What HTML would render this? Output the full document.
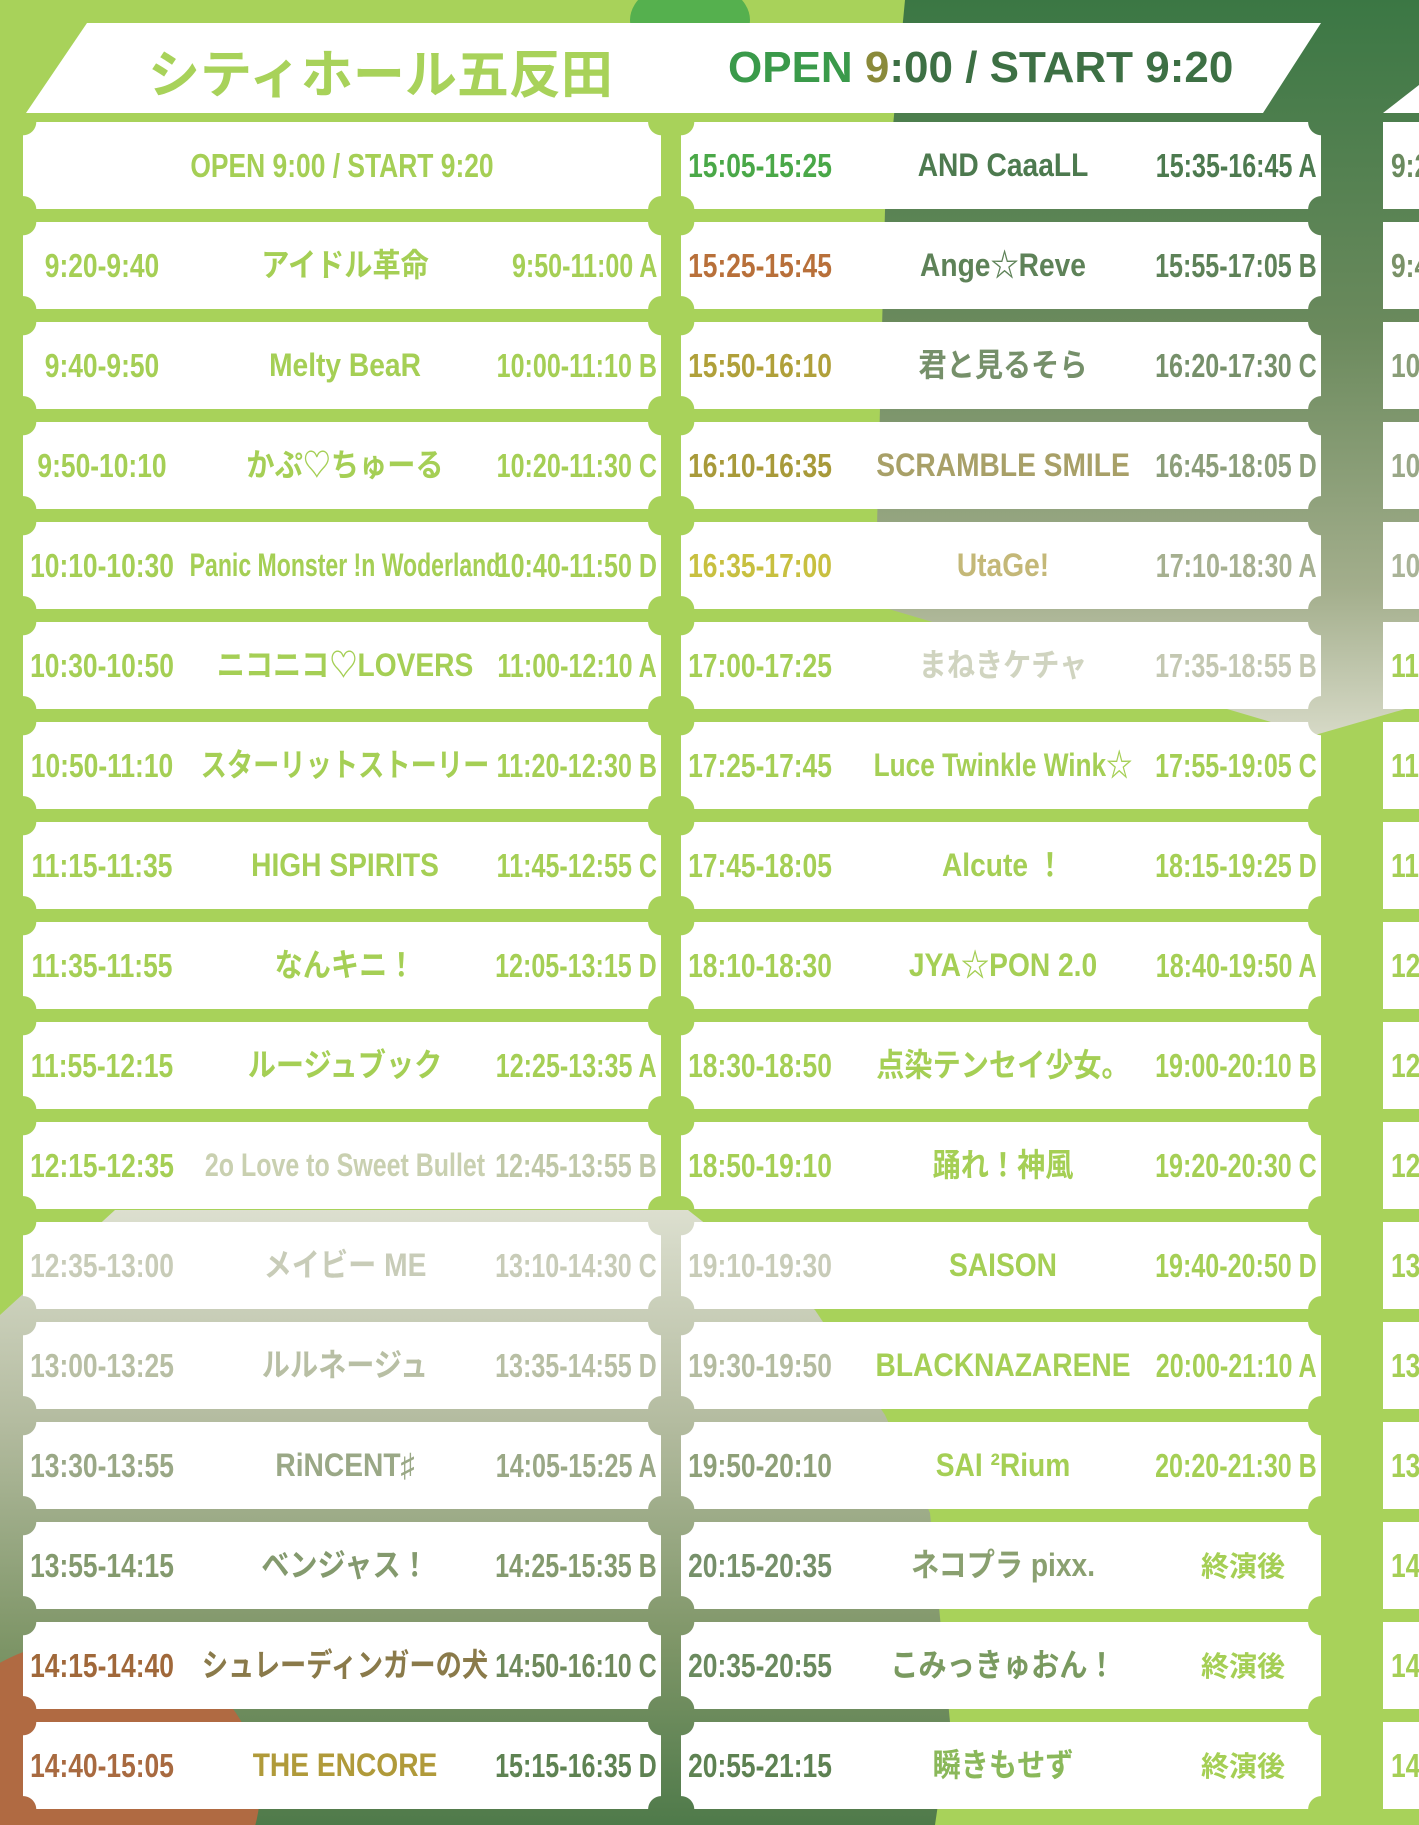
<!DOCTYPE html>
<html><head><meta charset="utf-8"><style>
*{margin:0;padding:0;box-sizing:border-box}
html,body{width:1419px;height:1825px;overflow:hidden}
body{position:relative;background:#a8d25a;font-family:"Liberation Sans","Noto Sans CJK JP",sans-serif;font-weight:bold}
svg.bg{position:absolute;left:0;top:0}
.c{position:absolute;height:87px;overflow:hidden;
background:
radial-gradient(circle at 0 0,transparent 13px,#fff 13.5px) top left/51% 51% no-repeat,
radial-gradient(circle at 100% 0,transparent 13px,#fff 13.5px) top right/51% 51% no-repeat,
radial-gradient(circle at 0 100%,transparent 13px,#fff 13.5px) bottom left/51% 51% no-repeat,
radial-gradient(circle at 100% 100%,transparent 13px,#fff 13.5px) bottom right/51% 51% no-repeat;
font-size:33px;line-height:87px;white-space:nowrap;color:#a5cf55}
.L{left:23px;width:638px}.M{left:681px;width:640px}.R{left:1383px;width:36px;background:#fff}
.c span{position:absolute;top:0}
.s{left:79px;transform:translateX(-50%) scaleX(.8)}
.n{left:322px;transform:translateX(-50%) scaleX(.88);font-size:32px;font-family:"Liberation Sans","Noto Sans CJK JP",sans-serif}
.e{right:4px;transform-origin:right center;transform:scaleX(.76)}
.f{left:562px;transform:translateX(-50%);font-family:"Noto Sans CJK JP",sans-serif;font-size:28px}
.R .s{left:8px;transform-origin:left center;transform:scaleX(.8)}
.hdr{position:absolute;font-weight:bold;white-space:nowrap}
</style></head><body>
<svg class="bg" width="1419" height="1825">
<defs>
<linearGradient id="g1" x1="0" y1="0" x2="0" y2="1"><stop offset="0" stop-color="#3b7744"/><stop offset=".45" stop-color="#6b8a5d"/><stop offset=".8" stop-color="#a3ae8c"/><stop offset="1" stop-color="#d6d9c6"/></linearGradient>
<linearGradient id="g2" x1="0" y1="0" x2="0" y2="1"><stop offset="0" stop-color="#dcdfcf"/><stop offset=".35" stop-color="#b3bb9f"/><stop offset=".7" stop-color="#7f9668"/><stop offset="1" stop-color="#4f7a4a"/></linearGradient>
</defs>
<polygon points="905,0 1419,0 1419,705 1315,735 875,605 885,210" fill="url(#g1)"/>
<polygon points="115,1210 688,1210 815,1310 885,1415 930,1513 950,1722 935,1825 0,1825 0,1315" fill="url(#g2)"/>
<ellipse cx="90" cy="1790" rx="170" ry="150" fill="#b06a42"/>
<ellipse cx="690" cy="20" rx="60" ry="40" fill="#55b04e"/>
</svg>
<svg class="bg" width="1419" height="1825"><polygon points="87,23 1321,23 1263,113 26,113" fill="#fff"/><polygon points="1419,85 1419,113 1383,113" fill="#fff"/></svg>
<div class="hdr" style="left:148px;top:36px;font-size:52px;color:#a8d25a;font-family:'Noto Sans CJK JP',sans-serif;line-height:70px">シティホール五反田</div>
<div class="hdr" style="left:728px;top:40px;font-size:44px;color:#3d7044;font-family:'Liberation Sans',sans-serif;line-height:56px"><span style="color:#3a9a4a">OPEN </span><span style="color:#8a8a3a">9</span>:00 / START 9:20</div>

<div class="c L" style="top:122px"><span style="left:50%;transform:translateX(-50%) scaleX(.8)">OPEN 9:00 / START 9:20</span></div>
<div class="c L" style="top:222px"><span class="s">9:20-9:40</span><span class="n">アイドル革命</span><span class="e">9:50-11:00 A</span></div>
<div class="c L" style="top:322px"><span class="s">9:40-9:50</span><span class="n">Melty BeaR</span><span class="e">10:00-11:10 B</span></div>
<div class="c L" style="top:422px"><span class="s">9:50-10:10</span><span class="n">かぷ♡ちゅーる</span><span class="e">10:20-11:30 C</span></div>
<div class="c L" style="top:522px"><span class="s">10:10-10:30</span><span class="n" style="transform:translateX(-50%) scaleX(.72)">Panic Monster !n Woderland</span><span class="e">10:40-11:50 D</span></div>
<div class="c L" style="top:622px"><span class="s">10:30-10:50</span><span class="n">ニコニコ♡LOVERS</span><span class="e">11:00-12:10 A</span></div>
<div class="c L" style="top:722px"><span class="s">10:50-11:10</span><span class="n" style="transform:translateX(-50%) scaleX(.82)">スターリットストーリー</span><span class="e">11:20-12:30 B</span></div>
<div class="c L" style="top:822px"><span class="s">11:15-11:35</span><span class="n">HIGH SPIRITS</span><span class="e">11:45-12:55 C</span></div>
<div class="c L" style="top:922px"><span class="s">11:35-11:55</span><span class="n">なんキニ！</span><span class="e">12:05-13:15 D</span></div>
<div class="c L" style="top:1022px"><span class="s">11:55-12:15</span><span class="n">ルージュブック</span><span class="e">12:25-13:35 A</span></div>
<div class="c L" style="top:1122px"><span class="s">12:15-12:35</span><span class="n" style="color:#c9d0b0;transform:translateX(-50%) scaleX(.78)">2o Love to Sweet Bullet</span><span class="e" style="color:#c0c8a8">12:45-13:55 B</span></div>
<div class="c L" style="top:1222px;color:#c8ccb8"><span class="s">12:35-13:00</span><span class="n">メイビー ME</span><span class="e">13:10-14:30 C</span></div>
<div class="c L" style="top:1322px;color:#b8bfa4"><span class="s">13:00-13:25</span><span class="n">ルルネージュ</span><span class="e">13:35-14:55 D</span></div>
<div class="c L" style="top:1422px;color:#9aa886"><span class="s">13:30-13:55</span><span class="n">RiNCENT♯</span><span class="e">14:05-15:25 A</span></div>
<div class="c L" style="top:1522px;color:#849a6e"><span class="s">13:55-14:15</span><span class="n">ベンジャス！</span><span class="e">14:25-15:35 B</span></div>
<div class="c L" style="top:1622px;color:#6f8a5c"><span class="s" style="color:#a0683a">14:15-14:40</span><span class="n" style="color:#8a7a4a;transform:translateX(-50%) scaleX(.82)">シュレーディンガーの犬</span><span class="e">14:50-16:10 C</span></div>
<div class="c L" style="top:1722px;color:#5e8252"><span class="s" style="color:#a86a40">14:40-15:05</span><span class="n" style="color:#b09a3a">THE ENCORE</span><span class="e">15:15-16:35 D</span></div>

<div class="c M" style="top:122px;color:#4d7a4f"><span class="s" style="color:#4aa848">15:05-15:25</span><span class="n">AND CaaaLL</span><span class="e">15:35-16:45 A</span></div>
<div class="c M" style="top:222px;color:#5e8258"><span class="s" style="color:#b8703a">15:25-15:45</span><span class="n">Ange☆Reve</span><span class="e">15:55-17:05 B</span></div>
<div class="c M" style="top:322px;color:#76906a"><span class="s" style="color:#b0a03a">15:50-16:10</span><span class="n">君と見るそら</span><span class="e">16:20-17:30 C</span></div>
<div class="c M" style="top:422px;color:#8c9e7a"><span class="s" style="color:#a89a3a">16:10-16:35</span><span class="n" style="color:#a8a068">SCRAMBLE SMILE</span><span class="e">16:45-18:05 D</span></div>
<div class="c M" style="top:522px;color:#a6b090"><span class="s" style="color:#c8c040">16:35-17:00</span><span class="n" style="color:#c4b878">UtaGe!</span><span class="e">17:10-18:30 A</span></div>
<div class="c M" style="top:622px;color:#c4c8b2"><span class="s" style="color:#a5cf55">17:00-17:25</span><span class="n" style="color:#d0d4c0">まねきケチャ</span><span class="e">17:35-18:55 B</span></div>
<div class="c M" style="top:722px"><span class="s">17:25-17:45</span><span class="n" style="transform:translateX(-50%) scaleX(.82)">Luce Twinkle Wink☆</span><span class="e">17:55-19:05 C</span></div>
<div class="c M" style="top:822px"><span class="s">17:45-18:05</span><span class="n">Alcute ！</span><span class="e">18:15-19:25 D</span></div>
<div class="c M" style="top:922px"><span class="s">18:10-18:30</span><span class="n">JYA☆PON 2.0</span><span class="e">18:40-19:50 A</span></div>
<div class="c M" style="top:1022px"><span class="s">18:30-18:50</span><span class="n">点染テンセイ少女。</span><span class="e">19:00-20:10 B</span></div>
<div class="c M" style="top:1122px"><span class="s">18:50-19:10</span><span class="n">踊れ！神風</span><span class="e">19:20-20:30 C</span></div>
<div class="c M" style="top:1222px"><span class="s" style="color:#c8ccb8">19:10-19:30</span><span class="n">SAISON</span><span class="e">19:40-20:50 D</span></div>
<div class="c M" style="top:1322px"><span class="s" style="color:#b4bca0">19:30-19:50</span><span class="n">BLACKNAZARENE</span><span class="e">20:00-21:10 A</span></div>
<div class="c M" style="top:1422px"><span class="s" style="color:#8ea078">19:50-20:10</span><span class="n">SAI ²Rium</span><span class="e">20:20-21:30 B</span></div>
<div class="c M" style="top:1522px"><span class="s" style="color:#76906a">20:15-20:35</span><span class="n" style="color:#8aa070">ネコプラ pixx.</span><span class="f">終演後</span></div>
<div class="c M" style="top:1622px"><span class="s" style="color:#6a8a5e">20:35-20:55</span><span class="n" style="color:#7a9a60">こみっきゅおん！</span><span class="f">終演後</span></div>
<div class="c M" style="top:1722px"><span class="s" style="color:#5e8252">20:55-21:15</span><span class="n" style="color:#8ab85a">瞬きもせず</span><span class="f">終演後</span></div>

<div class="c R" style="top:122px;color:#6a8a5e"><span class="s">9:20</span></div>
<div class="c R" style="top:222px;color:#7a9268"><span class="s">9:40</span></div>
<div class="c R" style="top:322px;color:#8a9e78"><span class="s">10:00</span></div>
<div class="c R" style="top:422px;color:#9aa888"><span class="s">10:10</span></div>
<div class="c R" style="top:522px;color:#aab498"><span class="s">10:30</span></div>
<div class="c R" style="top:622px"><span class="s">11:00</span></div>
<div class="c R" style="top:722px"><span class="s">11:10</span></div>
<div class="c R" style="top:822px"><span class="s">11:35</span></div>
<div class="c R" style="top:922px"><span class="s">12:00</span></div>
<div class="c R" style="top:1022px"><span class="s">12:20</span></div>
<div class="c R" style="top:1122px"><span class="s">12:40</span></div>
<div class="c R" style="top:1222px"><span class="s">13:00</span></div>
<div class="c R" style="top:1322px"><span class="s">13:20</span></div>
<div class="c R" style="top:1422px"><span class="s">13:40</span></div>
<div class="c R" style="top:1522px"><span class="s">14:00</span></div>
<div class="c R" style="top:1622px"><span class="s">14:20</span></div>
<div class="c R" style="top:1722px"><span class="s">14:40</span></div>
</body></html>
